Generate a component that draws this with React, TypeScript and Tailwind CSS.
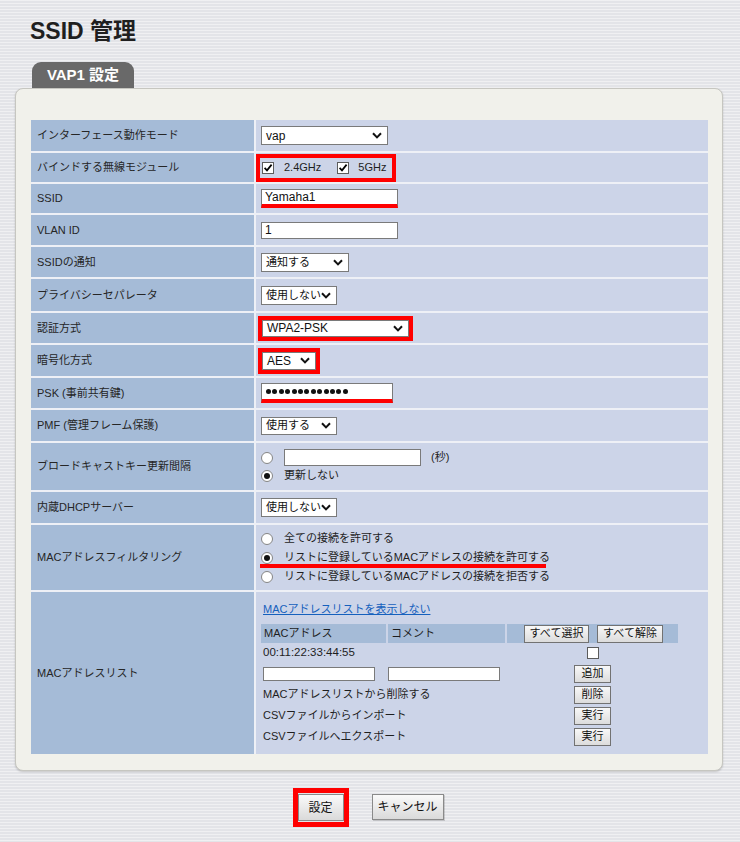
import React from "react";

/* ---------------- small form pieces ---------------- */
const Chevron = () => (
  <svg width="10" height="7" viewBox="0 0 10 7" className="shrink-0">
    <path d="M1 1.2 L5 5.4 L9 1.2" fill="none" stroke="#111" strokeWidth="2" />
  </svg>
);

interface SelectProps {
  value: string;
  className: string;
  textClass?: string;
}

const Select: React.FC<SelectProps> = ({ value, className, textClass = "text-[12px]" }) => (
  <div
    className={`flex items-center justify-between bg-white border border-[#7a7a7a] pl-[4px] pr-[5px] ${className}`}
  >
    <span className={`${textClass} leading-none text-[#111]`}>{value}</span>
    <Chevron />
  </div>
);

const Check: React.FC<{ checked?: boolean; className?: string }> = ({ checked, className = "" }) => (
  <span
    className={`w-[12px] h-[12px] shrink-0 border border-[#5c5c5c] bg-white flex items-center justify-center ${className}`}
  >
    {checked && (
      <svg width="10" height="10" viewBox="0 0 10 10">
        <path d="M1.6 4.8 L4 7.4 L8.6 1.6" fill="none" stroke="#000" strokeWidth="1.7" />
      </svg>
    )}
  </span>
);

const Radio: React.FC<{ on?: boolean }> = ({ on }) => (
  <span className="w-[12px] h-[12px] shrink-0 rounded-full border border-[#858585] bg-white flex items-center justify-center">
    {on && <span className="w-[6px] h-[6px] rounded-full bg-[#111]" />}
  </span>
);

const SmallBtn: React.FC<{ children: React.ReactNode; className: string }> = ({ children, className }) => (
  <button
    className={`h-[18px] border border-[#727272] bg-linear-to-b from-[#f8f8f8] to-[#dcdcdc] text-[11px] leading-none text-[#111] ${className}`}
  >
    {children}
  </button>
);

/* ---------------- one table row ---------------- */
interface RowProps {
  label: string;
  h: string;
  valueClass?: string;
  children: React.ReactNode;
}

const Row: React.FC<RowProps> = ({ label, h, valueClass = "flex items-center", children }) => (
  <div className={`grid grid-cols-[223px_1fr] gap-x-[2px] ${h}`}>
    <div className="flex items-center pl-[6px] bg-[#a5bbd7] text-[11px] text-[#262626]">{label}</div>
    <div className={`bg-[#ccd4e8] pl-[5px] text-[11px] text-[#1e1e1e] ${valueClass}`}>{children}</div>
  </div>
);

const App: React.FC = () => {
  return (
    <div className="w-[740px] h-[842px] overflow-hidden px-[15px] bg-[#e3e4e8] bg-[image:repeating-linear-gradient(180deg,rgba(255,255,255,0.45)_0px,rgba(255,255,255,0.45)_1px,transparent_1px,transparent_3px)] font-['Liberation_Sans','Noto_Sans_CJK_JP',sans-serif]">
      <h1 className="pl-[15px] pt-[17px] leading-[28px] text-[23px] font-bold text-[#1f1f1f]">SSID 管理</h1>

      <div className="ml-[17px] mt-[17px] w-[102px] h-[26px] rounded-t-[9px] bg-[#696969] text-white font-bold text-[15px] flex items-center justify-center">
        VAP1 設定
      </div>

      <div className="w-[708px] rounded-[8px] border border-[#c6c6c0] bg-[#f1f1eb] pt-[31px] pl-[15px] pr-[14px] pb-[16px] shadow-[0_1px_2px_rgba(0,0,0,0.18)]">
        <div className="flex flex-col gap-y-[2px] bg-[#eef0f6]">
          <Row label="インターフェース動作モード" h="h-[31px]">
            <Select value="vap" className="w-[127px] h-[19px]" />
          </Row>

          <Row label="バインドする無線モジュール" h="h-[29px]">
            <div className="ml-[-5px] h-[28px] border-[4px] border-[#ff0000] flex items-center pl-[2px] pr-[6px]">
              <Check checked />
              <span className="ml-[10px]">2.4GHz</span>
              <Check checked className="ml-[16px]" />
              <span className="ml-[9px]">5GHz</span>
            </div>
          </Row>

          <Row label="SSID" h="h-[29px]">
            <input
              readOnly
              value="Yamaha1"
              className="w-[137px] h-[19px] bg-white border border-[#7a7a7a] border-b-[4px] border-b-[#ff0000] px-[3px] text-[12px] text-[#111]"
            />
          </Row>

          <Row label="VLAN ID" h="h-[30px]">
            <input
              readOnly
              value="1"
              className="w-[137px] h-[17px] bg-white border border-[#7a7a7a] px-[3px] text-[12px] text-[#111]"
            />
          </Row>

          <Row label="SSIDの通知" h="h-[30px]">
            <Select value="通知する" className="w-[88px] h-[19px]" textClass="text-[11px]" />
          </Row>

          <Row label="プライバシーセパレータ" h="h-[32px]">
            <Select value="使用しない" className="w-[76px] h-[19px]" textClass="text-[11px]" />
          </Row>

          <Row label="認証方式" h="h-[30px]">
            <div className="ml-[-3px] border-[4px] border-[#ff0000]">
              <Select value="WPA2-PSK" className="w-[147px] h-[17px]" />
            </div>
          </Row>

          <Row label="暗号化方式" h="h-[31px]">
            <div className="ml-[-3px] border-[4px] border-[#ff0000]">
              <Select value="AES" className="w-[54px] h-[18px]" />
            </div>
          </Row>

          <Row label="PSK (事前共有鍵)" h="h-[30px]">
            <div className="w-[132px] h-[20px] bg-white border border-[#7a7a7a] border-b-[4px] border-b-[#ff0000] pl-[4px] flex items-center gap-[1.4px]">
              {Array.from({ length: 13 }).map((_, i) => (
                <span key={i} className="w-[5px] h-[5px] rounded-full bg-[#111]" />
              ))}
            </div>
          </Row>

          <Row label="PMF (管理フレーム保護)" h="h-[31px]">
            <Select value="使用する" className="w-[76px] h-[18px]" textClass="text-[11px]" />
          </Row>

          <Row label="ブロードキャストキー更新間隔" h="h-[47px]">
            <div className="flex flex-col">
              <div className="flex items-center h-[18px]">
                <Radio />
                <input readOnly className="ml-[11px] w-[137px] h-[17px] bg-white border border-[#7a7a7a]" />
                <span className="ml-[10px]">(秒)</span>
              </div>
              <div className="flex items-center h-[18px]">
                <Radio on />
                <span className="ml-[11px]">更新しない</span>
              </div>
            </div>
          </Row>

          <Row label="内蔵DHCPサーバー" h="h-[31px]">
            <Select value="使用しない" className="w-[76px] h-[19px]" textClass="text-[11px]" />
          </Row>

          <Row label="MACアドレスフィルタリング" h="h-[65px]">
            <div className="flex flex-col">
              <div className="flex items-center h-[19px]">
                <Radio />
                <span className="ml-[11px]">全ての接続を許可する</span>
              </div>
              <div className="relative flex items-center h-[19px]">
                <Radio on />
                <span className="ml-[11px]">リストに登録しているMACアドレスの接続を許可する</span>
                <span className="absolute left-[-1px] top-[16px] w-[286px] h-[4px] bg-[#ff0000]" />
              </div>
              <div className="flex items-center h-[19px]">
                <Radio />
                <span className="ml-[11px]">リストに登録しているMACアドレスの接続を拒否する</span>
              </div>
            </div>
          </Row>

          <Row label="MACアドレスリスト" h="h-[162px]" valueClass="flex flex-col pt-[9px]">
            <span className="pl-[2px] leading-[16px] text-[#1560bd] underline">MACアドレスリストを表示しない</span>

            <div className="mt-[7px] grid grid-cols-[125px_117px_171px] gap-x-[2px]">
              <div className="h-[19px] bg-[#a5bbd7] flex items-center pl-[3px]">MACアドレス</div>
              <div className="h-[19px] bg-[#a5bbd7] flex items-center pl-[3px]">コメント</div>
              <div className="h-[19px] bg-[#a5bbd7] flex items-center justify-center gap-[8px] pl-[2px]">
                <SmallBtn className="w-[65px]">すべて選択</SmallBtn>
                <SmallBtn className="w-[66px]">すべて解除</SmallBtn>
              </div>

              <div className="col-span-2 h-[20px] flex items-center pl-[2px] text-[11.5px]">00:11:22:33:44:55</div>
              <div className="h-[20px] flex items-center justify-center">
                <Check className="w-[11px] h-[11px]" />
              </div>

              <div className="h-[21px] flex items-center pl-[2px]">
                <input readOnly className="w-[112px] h-[14px] bg-white border border-[#7a7a7a]" />
              </div>
              <div className="h-[21px] flex items-center">
                <input readOnly className="w-[112px] h-[14px] bg-white border border-[#7a7a7a]" />
              </div>
              <div className="h-[21px] flex items-center justify-center">
                <SmallBtn className="w-[37px]">追加</SmallBtn>
              </div>

              <div className="col-span-2 h-[21px] flex items-center pl-[2px]">MACアドレスリストから削除する</div>
              <div className="h-[21px] flex items-center justify-center">
                <SmallBtn className="w-[37px]">削除</SmallBtn>
              </div>

              <div className="col-span-2 h-[21px] flex items-center pl-[2px]">CSVファイルからインポート</div>
              <div className="h-[21px] flex items-center justify-center">
                <SmallBtn className="w-[37px]">実行</SmallBtn>
              </div>

              <div className="col-span-2 h-[21px] flex items-center pl-[2px]">CSVファイルへエクスポート</div>
              <div className="h-[21px] flex items-center justify-center">
                <SmallBtn className="w-[37px]">実行</SmallBtn>
              </div>
            </div>
          </Row>
        </div>
      </div>

      {/* ---------------- submit buttons ---------------- */}
      <div className="flex justify-center items-start mt-[17px] pr-[4px]">
        <div className="border-[5px] border-[#ff0000] py-[1px]">
          <button className="w-[46px] h-[27px] border border-[#8a8a8a] bg-linear-to-b from-[#fafafa] to-[#dadada] text-[12px] text-[#111]">
            設定
          </button>
        </div>
        <button className="ml-[23px] mt-[6px] w-[72px] h-[26px] border border-[#8a8a8a] bg-linear-to-b from-[#fafafa] to-[#dadada] text-[12px] text-[#111] shadow-[1px_1px_0_rgba(0,0,0,0.15)]">
          キャンセル
        </button>
      </div>
    </div>
  );
};

export default App;
